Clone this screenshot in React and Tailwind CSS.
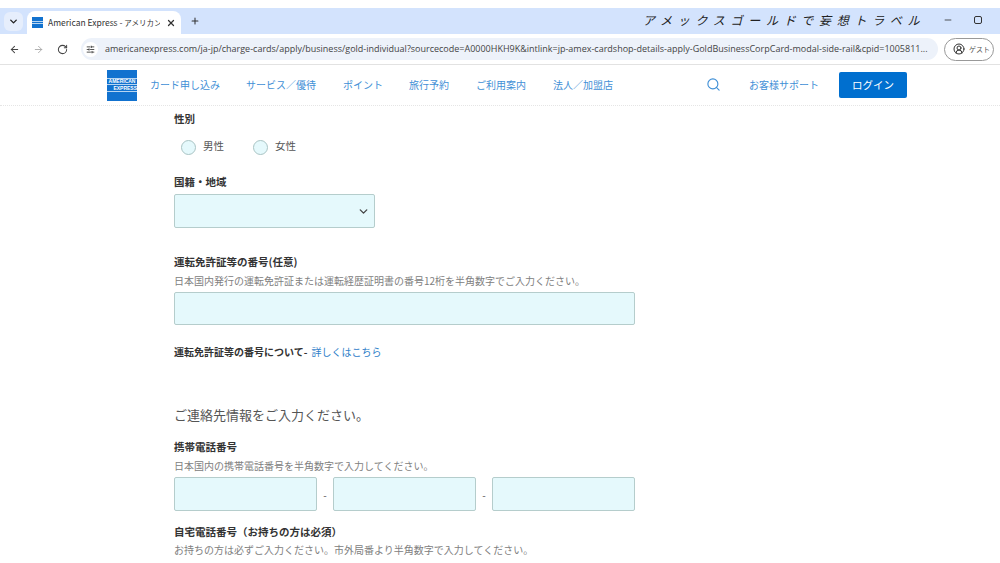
import React from "react";
import { ArrowLeft, ArrowRight, RotateCw, ChevronDown, X, Plus, Minus, Search, SlidersHorizontal, CircleUserRound } from "lucide-react";

const font = { fontFamily: '"Noto Sans CJK JP", "Noto Sans", sans-serif' };

function AmexLogo() {
  return (
    <div className="w-[30px] h-[31px] bg-[#1272cf] flex flex-col justify-center items-center text-white font-bold text-[5px] font-['Liberation_Sans',sans-serif]">
      <span className="w-full text-center border-y border-white/70 leading-[5px]">AMERICAN</span>
      <span className="w-full text-right border-b border-white/70 leading-[6px]">EXPRESS</span>
    </div>
  );
}

const navItems = [
  ["カード申し込み", "w-[96px]"],
  ["サービス／優待", "w-[97px]"],
  ["ポイント", "w-[66px]"],
  ["旅行予約", "w-[67px]"],
  ["ご利用案内", "w-[77px]"],
  ["法人／加盟店", "w-[71px]"],
];

function Label({ children, className = "" }) {
  return <div className={`text-[10.5px] leading-4 font-bold text-[#333] ${className}`}>{children}</div>;
}
function Hint({ children, className = "" }) {
  return <div className={`text-[10px] leading-4 text-[#808080] ${className}`}>{children}</div>;
}
function Field({ className = "", children }) {
  return <div className={`bg-[#e5f9fc] border border-[#b5cdcc] rounded-[2px] ${className}`}>{children}</div>;
}
function Radio({ label }) {
  return (
    <div className="flex items-center gap-[7px]">
      <span className="w-[15px] h-[15px] rounded-full bg-[#e5f9fc] border border-[#a9c4c4]" />
      <span className="text-[10.5px] leading-4 text-[#555] -mt-[2px]">{label}</span>
    </div>
  );
}

export default function App() {
  return (
    <div style={font} className="relative w-[1000px] h-[563px] overflow-hidden bg-white">
      <div className="h-[8px] bg-white" />
      {/* tab strip */}
      <div className="h-[26px] bg-[#d3e3fd] flex items-end pl-[4px]">
        <div className="w-[19px] h-[19px] mb-[3px] rounded-[6px] bg-[#e6eefc] flex items-center justify-center">
          <ChevronDown size={11} strokeWidth={3} className="text-[#222]" />
        </div>
        <div className="ml-[4px] w-[154px] h-[23px] bg-white rounded-t-[8px] flex items-center pl-[5px]">
          <div className="w-[11px] h-[11px] bg-[#1272cf] shrink-0 flex flex-col justify-center gap-[1px]">
            <span className="h-[1px] bg-white/70" />
            <span className="h-[1px] bg-white/70" />
          </div>
          <span className="ml-[5px] text-[8.5px] text-[#333] whitespace-nowrap overflow-hidden w-[112px]">American Express - <span className="text-[7.5px]">アメリカン･エキスプレス</span></span>
          <X size={10} strokeWidth={3} className="ml-[6px] shrink-0 text-[#333]" />
        </div>
        <Plus size={10} strokeWidth={2.5} className="ml-[9px] mb-[8px] text-[#333]" />
      </div>
      {/* toolbar */}
      <div className="h-[31px] bg-white border-b border-[#e2e2e2] flex items-center pl-[9px]">
        <ArrowLeft size={11} strokeWidth={2.2} className="text-[#444]" />
        <ArrowRight size={11} strokeWidth={2} className="ml-[13px] text-[#aaa]" />
        <RotateCw size={11} strokeWidth={2.2} className="ml-[13px] text-[#444]" />
        <div className="ml-[13px] w-[857px] h-[22px] rounded-full bg-[#edf2fa] flex items-center pl-[2px]">
          <span className="w-[15px] h-[15px] rounded-full bg-white flex items-center justify-center shrink-0">
            <SlidersHorizontal size={9} strokeWidth={2.2} className="text-[#333]" />
          </span>
          <span className="ml-[7px] text-[9px] text-[#444] whitespace-nowrap font-['Open_Sans',sans-serif]">americanexpress.com/ja-jp/charge-cards/apply/business/gold-individual?sourcecode=A0000HKH9K&amp;intlink=jp-amex-cardshop-details-apply-GoldBusinessCorpCard-modal-side-rail&amp;cpid=1005811...</span>
        </div>
        <div className="ml-[6px] w-[50px] h-[23px] rounded-full border border-[#999] flex items-center pl-[8px] gap-[4px]">
          <CircleUserRound size={12} strokeWidth={2} className="text-[#333]" />
          <span className="text-[7px] text-[#555]">ゲスト</span>
        </div>
      </div>
      {/* site nav */}
      <div className="h-[41px] border-b border-dotted border-[#e5e5e5] flex items-center pl-[107px]">
        <AmexLogo />
        <div className="ml-[13px] -mt-[1px] flex items-center text-[10px] text-[#3f8fd6]">
          {navItems.map(([t, w]) => (
            <span key={t} className={`${w} whitespace-nowrap`}>{t}</span>
          ))}
        </div>
        <Search size={15} strokeWidth={1.8} className="ml-[82px] -mt-[2px] text-[#3f8fd6]" />
        <span className="ml-[28px] -mt-[1px] text-[10px] text-[#3f8fd6] whitespace-nowrap">お客様サポート</span>
        <div className="ml-[20px] w-[68px] h-[26px] bg-[#006fcf] rounded-[2px] flex items-center justify-center text-[10.5px] text-white">ログイン</div>
      </div>
      {/* form */}
      <div className="pl-[174px] pt-[5px]">
        <Label>性別</Label>
        <div className="mt-[12px] ml-[7px] flex gap-[29px] h-[16px] items-center">
          <Radio label="男性" />
          <Radio label="女性" />
        </div>
        <Label className="mt-[19px]">国籍・地域</Label>
        <Field className="mt-[4px] w-[201px] h-[34px] flex items-center justify-end pr-[4px]">
          <ChevronDown size={13} strokeWidth={2.5} className="text-[#444]" />
        </Field>
        <Label className="mt-[26px]">運転免許証等の番号(任意)</Label>
        <Hint className="mt-[3px]">日本国内発行の運転免許証または運転経歴証明書の番号12桁を半角数字でご入力ください。</Hint>
        <Field className="mt-[3px] w-[461px] h-[33px]" />
        <div className="mt-[19px] text-[10px] leading-4 flex">
          <span className="font-bold text-[#333]">運転免許証等の番号について-</span>
          <span className="ml-[4px] text-[#2f80c9]">詳しくはこちら</span>
        </div>
        <div className="mt-[45px] text-[13px] leading-5 text-[#555]">ご連絡先情報をご入力ください。</div>
        <Label className="mt-[14px]">携帯電話番号</Label>
        <Hint className="mt-[3px]">日本国内の携帯電話番号を半角数字で入力してください。</Hint>
        <div className="mt-[3px] flex items-center w-[461px]">
          <Field className="w-[143px] h-[34px]" />
          <span className="w-[16px] text-center text-[10px] text-[#555]">-</span>
          <Field className="w-[143px] h-[34px]" />
          <span className="w-[16px] text-center text-[10px] text-[#555]">-</span>
          <Field className="w-[143px] h-[34px]" />
        </div>
        <Label className="mt-[13px]">自宅電話番号（お持ちの方は必須）</Label>
        <Hint className="mt-[2px]">お持ちの方は必ずご入力ください。市外局番より半角数字で入力してください。</Hint>
      </div>
      {/* overlay: caption laid over the tab strip */}
      <div style={{ fontFamily: '"Noto Sans CJK JP", serif' }} className="absolute left-[643px] top-[12px] text-[12px] leading-4 tracking-[5.7px] text-[#222] italic whitespace-nowrap">アメックスゴールドで妄想トラベル</div>
      <Minus size={10} strokeWidth={2} className="absolute left-[943px] top-[15px] text-[#333]" />
      <div className="absolute left-[974px] top-[16px] w-[8px] h-[8px] border border-[#333] rounded-[2px]" />
    </div>
  );
}
